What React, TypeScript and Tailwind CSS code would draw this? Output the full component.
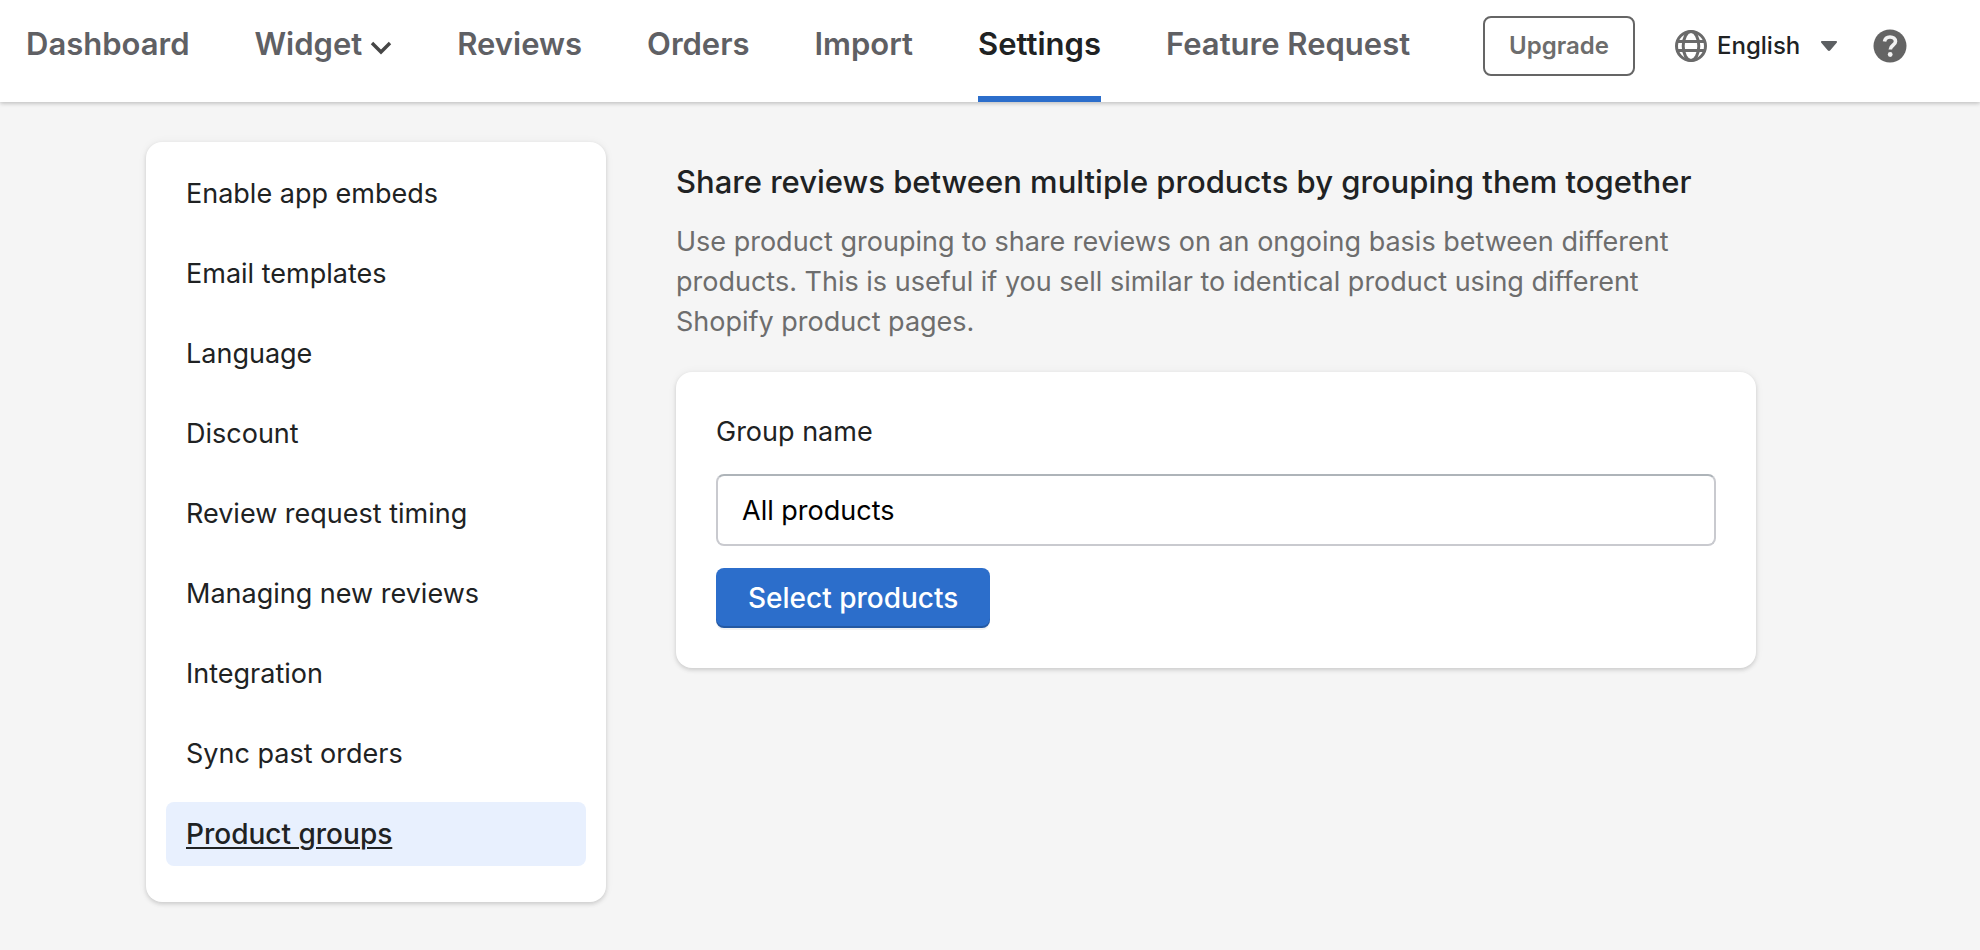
import { useState } from "react";
import type { FormEvent } from "react";

const navItems = ["Dashboard", "Widget", "Reviews", "Orders", "Import", "Settings", "Feature Request"];

const settingsSections = [
  "Enable app embeds",
  "Email templates",
  "Language",
  "Discount",
  "Review request timing",
  "Managing new reviews",
  "Integration",
  "Sync past orders",
  "Product groups",
];

function ChevronIcon() {
  return (
    <svg viewBox="0 0 22 16" className="h-4 w-[22px]" fill="none" aria-hidden="true">
      <path d="M2 3 L11 12 L20 3" stroke="#464646" strokeWidth="3.4" />
    </svg>
  );
}

function GlobeIcon() {
  return (
    <svg viewBox="0 0 32 32" className="h-8 w-8 shrink-0" fill="none" stroke="#6a6a6a" strokeWidth="3" aria-hidden="true">
      <circle cx="16" cy="16" r="14.5" />
      <ellipse cx="16" cy="16" rx="7.8" ry="14.5" />
      <path d="M2.5 11.5h27M2.5 20.5h27" />
    </svg>
  );
}

function HelpIcon() {
  return (
    <svg viewBox="0 0 34 34" className="h-[34px] w-[34px]" fill="none" aria-hidden="true">
      <circle cx="17" cy="17" r="16.5" fill="#646464" />
      <path
        d="M11.5 12.500c.5-3 2.700-4.500 5.500-4.500 3.200 0 5.500 1.800 5.500 4.500 0 3.900-5.200 3.700-5.200 8"
        stroke="#f2f2f2"
        strokeWidth="3.6"
      />
      <circle cx="17.2" cy="25.5" r="2.4" fill="#f2f2f2" />
    </svg>
  );
}

function Header() {
  const [language, setLanguage] = useState("en");

  return (
    <header className="flex h-[102px] items-start bg-white pl-[26px] pr-[73px] shadow-[0_0_4px_rgba(0,0,0,0.1),0_2px_4px_rgba(0,0,0,0.15)]">
      <nav className="flex h-full gap-[65px] text-[31px] font-semibold leading-10">
        {navItems.map((item) => (
          <a
            key={item}
            href="#"
            className={
              item === "Settings"
                ? "flex items-start whitespace-nowrap border-b-[6px] border-[#2c6ecb] pt-6 text-[#202223]"
                : "flex items-start whitespace-nowrap pt-6 text-[#5f6064]"
            }
          >
            {item}
            {item === "Widget" && (
              <span className="flex h-12 items-center pl-2">
                <ChevronIcon />
              </span>
            )}
          </a>
        ))}
      </nav>
      <div className="ml-auto flex items-center pt-4">
        <button type="button" className="h-[60px] rounded-lg border-2 border-[#656565] px-6 text-2xl font-semibold text-[#6d6d6d]">
          Upgrade
        </button>
        <div className="ml-10 flex items-center">
          <GlobeIcon />
          <select
            aria-label="Language"
            value={language}
            onChange={(e) => setLanguage(e.target.value)}
            className="ml-[10px] mr-5 appearance-none bg-transparent text-2xl font-medium text-[#202223]"
          >
            <option value="en">English</option>
          </select>
          <svg viewBox="0 0 16 10" className="h-[10px] w-4" aria-hidden="true">
            <path d="M1 0h14c.9 0 1.3 1 .7 1.7L9.3 9.2c-.7.9-1.9.9-2.6 0L.3 1.7C-.3 1 .1 0 1 0z" fill="#5c5f62" />
          </svg>
        </div>
        <button type="button" aria-label="Help" className="ml-9">
          <HelpIcon />
        </button>
      </div>
    </header>
  );
}

function Sidebar() {
  return (
    <aside className="w-[460px] shrink-0 rounded-2xl bg-white px-5 pb-9 pt-5 shadow-[0_0_10px_rgba(23,24,24,0.05),0_2px_4px_rgba(0,0,0,0.15)]">
      <nav className="flex flex-col gap-4 text-[#202223]">
        {settingsSections.map((section) => (
          <a
            key={section}
            href="#"
            className={
              section === "Product groups"
                ? "rounded-lg bg-[#e8f0fe] px-5 py-3 text-[28px] font-medium leading-10 underline decoration-2 underline-offset-[3px]"
                : "rounded-lg px-5 py-3 text-[27px] leading-10"
            }
          >
            {section}
          </a>
        ))}
      </nav>
    </aside>
  );
}

function ProductGroups() {
  const [groupName, setGroupName] = useState("All products");

  function handleSubmit(e: FormEvent) {
    e.preventDefault();
  }

  return (
    <main className="min-w-0 flex-1 pt-5">
      <h1 className="text-[31px] font-medium leading-10 text-[#202223]">
        Share reviews between multiple products by grouping them together
      </h1>
      <p className="mt-5 pr-10 text-[27px] leading-10 text-[#6d6d6d]">
        Use product grouping to share reviews on an ongoing basis between different products. This is useful if you
        sell similar to identical product using different Shopify product pages.
      </p>
      <form
        onSubmit={handleSubmit}
        className="mt-[30px] rounded-2xl bg-white p-10 text-[27px] leading-10 shadow-[0_0_10px_rgba(23,24,24,0.05),0_2px_4px_rgba(0,0,0,0.15)]"
      >
        <label htmlFor="group-name" className="block text-[#202223]">
          Group name
        </label>
        <input
          id="group-name"
          type="text"
          value={groupName}
          onChange={(e) => setGroupName(e.target.value)}
          className="mt-[22px] block h-[72px] w-full rounded-lg border-2 border-[#c9cacf] border-t-[#aeb4b9] bg-white px-6 text-black"
        />
        <button
          type="submit"
          className="mt-[22px] block h-[60px] rounded-lg bg-[#2c6ecb] px-8 text-[28px] font-medium text-white shadow-[0_2px_0_rgba(0,0,0,0.05),inset_0_-2px_0_rgba(0,0,0,0.2)]"
        >
          Select products
        </button>
      </form>
    </main>
  );
}

export default function App() {
  return (
    <div className="min-h-screen bg-[#f5f5f5] font-['Inter',sans-serif]">
      <Header />
      <div className="flex items-start gap-[70px] pb-12 pl-[146px] pr-56 pt-10">
        <Sidebar />
        <ProductGroups />
      </div>
    </div>
  );
}
